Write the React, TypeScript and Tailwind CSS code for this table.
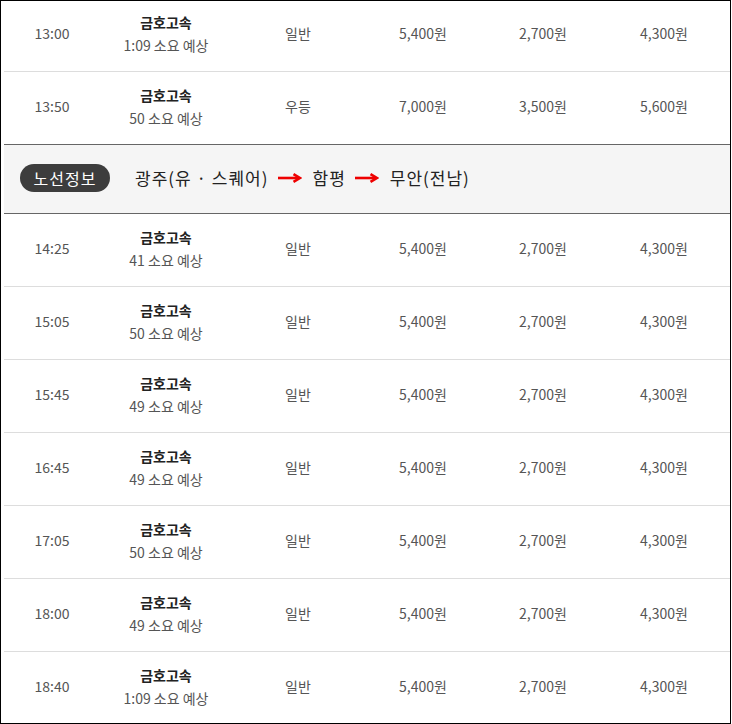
const rows1 = [
  { time: "13:00", dur: "1:09", grade: "일반", a: "5,400원", b: "2,700원", c: "4,300원" },
  { time: "13:50", dur: "50", grade: "우등", a: "7,000원", b: "3,500원", c: "5,600원" },
]

const rows2 = [
  { time: "14:25", dur: "41", grade: "일반", a: "5,400원", b: "2,700원", c: "4,300원" },
  { time: "15:05", dur: "50", grade: "일반", a: "5,400원", b: "2,700원", c: "4,300원" },
  { time: "15:45", dur: "49", grade: "일반", a: "5,400원", b: "2,700원", c: "4,300원" },
  { time: "16:45", dur: "49", grade: "일반", a: "5,400원", b: "2,700원", c: "4,300원" },
  { time: "17:05", dur: "50", grade: "일반", a: "5,400원", b: "2,700원", c: "4,300원" },
  { time: "18:00", dur: "49", grade: "일반", a: "5,400원", b: "2,700원", c: "4,300원" },
  { time: "18:40", dur: "1:09", grade: "일반", a: "5,400원", b: "2,700원", c: "4,300원" },
]

type Row = (typeof rows1)[number]

function BusRow({ r, last }: { r: Row; last?: boolean }) {
  return (
    <div
      className={`grid grid-cols-[96px_132px_132px_118px_122px_1fr] items-center pb-[3px] text-[14px] text-[#555] ${
        last ? "h-[72px]" : "h-[73px] border-b border-[#dddddd]"
      }`}
    >
      <div className="text-center">{r.time}</div>
      <div className="flex flex-col items-center leading-[23px]">
        <span className="font-bold text-[#222]">금호고속</span>
        <span>{r.dur} 소요 예상</span>
      </div>
      <div className="text-center">{r.grade}</div>
      <div className="text-center">{r.a}</div>
      <div className="text-center">{r.b}</div>
      <div className="text-center pr-[6px]">{r.c}</div>
    </div>
  )
}

function Arrow() {
  return (
    <svg width="24" height="10" viewBox="0 0 24 10" className="ml-[9px] mr-[11px]">
      <path d="M0 5 H21" stroke="#ee0000" strokeWidth="2.6" />
      <path d="M15.5 1.2 L21.8 5 L15.5 8.8" stroke="#ee0000" strokeWidth="2.6" fill="none" />
    </svg>
  )
}

export default function App() {
  return (
    <div
      className="w-[731px] h-[724px] border border-black overflow-hidden pl-[3px] bg-white"
      style={{ fontFamily: '"Noto Sans CJK KR", "Noto Sans", sans-serif' }}
    >
      <div className="-mt-[2px]">
        {rows1.map((r, i) => (
          <BusRow key={r.time} r={r} last={i === rows1.length - 1} />
        ))}

        {/* 노선정보 */}
        <div className="flex items-center h-[70px] pb-[3px] bg-[#f5f5f5] border-y border-[#666666] pl-[16px]">
          <span className="inline-flex items-center justify-center w-[90px] h-[28px] rounded-full bg-[#3d3d3d] text-white text-[16px] tracking-[1px]">
            노선정보
          </span>
          <div className="flex items-center ml-[25px] text-[17px] tracking-[1px] text-[#222]">
            <span>광주(유 · 스퀘어)</span>
            <Arrow />
            <span>함평</span>
            <Arrow />
            <span>무안(전남)</span>
          </div>
        </div>

        {rows2.map((r) => (
          <BusRow key={r.time} r={r} />
        ))}
      </div>
    </div>
  )
}
